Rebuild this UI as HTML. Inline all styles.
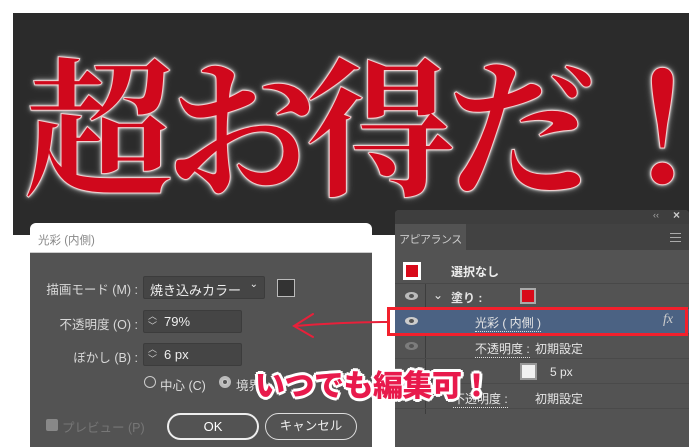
<!DOCTYPE html>
<html><head><meta charset="utf-8"><style>
*{margin:0;padding:0;box-sizing:border-box}
body{width:700px;height:447px;background:#fff;position:relative;overflow:hidden;font-family:"Liberation Sans","Noto Sans CJK JP",sans-serif}
.a{position:absolute;white-space:nowrap}
.big{position:absolute;top:44px;font-family:"Noto Serif CJK SC","Noto Serif CJK JP",serif;font-weight:700;font-size:150px;line-height:1;color:#d0081c;-webkit-text-stroke:1px #f0d0d0;text-shadow:0 0 2px #fff,0 0 4px #ccc,0 0 8px #888}
.lbl{position:absolute;color:#d8d8d8;font-size:12.5px;text-align:right;width:120px;left:18px;white-space:nowrap}
.box{position:absolute;background:#454545;border:1px solid #3c3c3c;border-radius:2px;color:#eee;font-size:13px;white-space:nowrap}
.row{position:absolute;left:0;width:295px;height:25px;border-bottom:1px solid #4a4a4a;color:#e6e6e6;font-size:12px}
.eye{position:absolute;left:10px;top:8px;width:13px;height:8px;border-radius:50%;background:#bbb}
.eye:after{content:"";position:absolute;left:4px;top:2px;width:5px;height:4px;border-radius:50%;background:#535353}
.ul{border-bottom:1px dotted #ddd}
</style></head><body>
<div class="a" style="left:13px;top:13px;width:676px;height:222px;background:#2b2b2b"></div>
<div class="big" style="left:24px">超</div>
<div class="big" style="left:166px">お</div>
<div class="big" style="left:306px">得</div>
<div class="big" style="left:446px">だ</div>
<div class="big" style="left:625px;width:65px;overflow:hidden;white-space:nowrap">！</div>

<!-- dialog -->
<div class="a" style="left:30px;top:223px;width:342px;height:224px;background:#535353;border-radius:6px 6px 0 0;overflow:hidden">
 <div class="a" style="left:0;top:0;width:342px;height:30px;background:#fff;border-bottom:1px solid #ccc"></div>
 <div class="a" style="left:8px;top:9px;font-size:11.5px;color:#888">光彩 (内側)</div>
</div>
<div class="lbl" style="top:279px">描画モード (M) :</div>
<div class="box" style="left:143px;top:276px;width:122px;height:23px;padding:3px 6px">焼き込みカラー<span style="position:absolute;right:6px;top:2px;font-size:10px">⌄</span></div>
<div class="a" style="left:277px;top:279px;width:18px;height:18px;border:1px solid #bbb;background:#333"></div>
<div class="lbl" style="top:314px">不透明度 (O) :</div>
<div class="box" style="left:143px;top:310px;width:99px;height:23px;padding:3px 20px"><span style="position:absolute;left:4px;top:0;font-size:9px;line-height:10px;color:#ccc">︿<br>﹀</span>79%</div>
<div class="lbl" style="top:347px">ぼかし (B) :</div>
<div class="box" style="left:143px;top:343px;width:99px;height:23px;padding:3px 20px"><span style="position:absolute;left:4px;top:0;font-size:9px;line-height:10px;color:#ccc">︿<br>﹀</span>6 px</div>
<div class="a" style="left:144px;top:376px;width:12px;height:12px;border:1px solid #ccc;border-radius:50%"></div>
<div class="a" style="left:160px;top:375px;font-size:12.5px;color:#ddd">中心 (C)</div>
<div class="a" style="left:219px;top:376px;width:12px;height:12px;border-radius:50%;background:#ccc;border:3px solid #bbb"><div style="width:4px;height:4px;margin:1px;background:#555;border-radius:50%"></div></div>
<div class="a" style="left:236px;top:375px;font-size:12.5px;color:#ddd">境界</div>
<div class="a" style="left:46px;top:419px;width:12px;height:12px;background:#888;border-radius:2px"></div>
<div class="a" style="left:62px;top:417px;font-size:12.5px;color:#777">プレビュー (P)</div>
<div class="a" style="left:167px;top:413px;width:92px;height:27px;border:2px solid #eee;border-radius:14px;color:#fff;font-size:13px;text-align:center;line-height:23px">OK</div>
<div class="a" style="left:265px;top:413px;width:92px;height:27px;border:1px solid #ddd;border-radius:14px;color:#eee;font-size:12.5px;text-align:center;line-height:25px">キャンセル</div>

<!-- arrow -->
<svg class="a" style="left:285px;top:310px" width="110" height="35"><path d="M103 12 Q60 12 10 16 M28 4 L9 16 L28 27" stroke="#e8203a" stroke-width="2" fill="none" stroke-linecap="round"/></svg>

<!-- panel -->
<div class="a" style="left:395px;top:210px;width:294px;height:237px;background:#535353;border-radius:4px 4px 0 0;overflow:hidden">
 <div class="a" style="left:0;top:0;width:294px;height:14px;background:#3e3e3e"></div>
 <div class="a" style="left:258px;top:0;font-size:9px;color:#aaa">‹‹</div>
 <div class="a" style="left:278px;top:-2px;font-size:12px;color:#ccc;font-weight:bold">×</div>
 <div class="a" style="left:0;top:14px;width:294px;height:26px;background:#424242"></div>
 <div class="a" style="left:0;top:14px;width:71px;height:26px;background:#535353;color:#ccc;font-size:11px;padding:7px 0 0 4px;letter-spacing:-0.5px">アピアランス</div>
 <div class="a" style="left:275px;top:23px;width:11px;height:9px;border-top:1.5px solid #aaa;border-bottom:1.5px solid #aaa"><div style="margin-top:2.5px;border-top:1.5px solid #aaa"></div></div>
 <div class="a" style="left:8px;top:52px;width:18px;height:18px;border:3px solid #fff;background:#d80a1a"></div>
 <div class="a" style="left:56px;top:53px;color:#eee;font-size:12px;font-weight:bold">選択なし</div>
 <div class="a" style="left:0;top:73px;width:294px;height:1px;background:#484848"></div>
 <div class="a" style="left:30px;top:74px;width:1px;height:130px;background:#3d3d3d"></div>
 <div class="row" style="top:74px"><div class="eye"></div><span class="a" style="left:38px;top:4px">⌄</span><span class="a" style="left:56px;top:5px;font-weight:bold">塗り :</span><div class="a" style="left:125px;top:4px;width:16px;height:16px;border:2px solid #aaa;background:#d80a1a"></div></div>
 <div class="row" style="top:99px;background:#4b6283"><div class="eye" style="background:#ccc"></div><span class="a ul" style="left:80px;top:5px">光彩 ( 内側 )</span><span class="a" style="left:268px;top:3px;font-style:italic;font-family:'Liberation Serif',serif;font-size:14px;color:#ccc">fx</span></div>
 <div class="row" style="top:124px"><div class="eye" style="opacity:.4"></div><span class="a ul" style="left:80px;top:6px">不透明度 :</span><span class="a" style="left:140px;top:6px">初期設定</span></div>
 <div class="row" style="top:149px"><div class="a" style="left:125px;top:4px;width:17px;height:17px;border:2px solid #999;background:#f2f2f2"></div><span class="a" style="left:155px;top:6px">5 px</span></div>
 <div class="row" style="top:174px"><div class="eye" style="opacity:.4"></div><span class="a ul" style="left:58px;top:6px">不透明度 :</span><span class="a" style="left:140px;top:6px">初期設定</span></div>
</div>
<div class="a" style="left:387px;top:307px;width:301px;height:29px;border:3px solid #f2202c"></div>

<div class="a" style="left:255px;top:361px;font-size:30px;font-weight:900;color:#e81a4c;letter-spacing:-0.5px;text-shadow:2px 0 #fff,-2px 0 #fff,0 2px #fff,0 -2px #fff,2px 2px #fff,-2px -2px #fff,2px -2px #fff,-2px 2px #fff,3px 0 #fff,-3px 0 #fff,0 3px #fff,0 -3px #fff">いつでも編集可！</div>
</body></html>
